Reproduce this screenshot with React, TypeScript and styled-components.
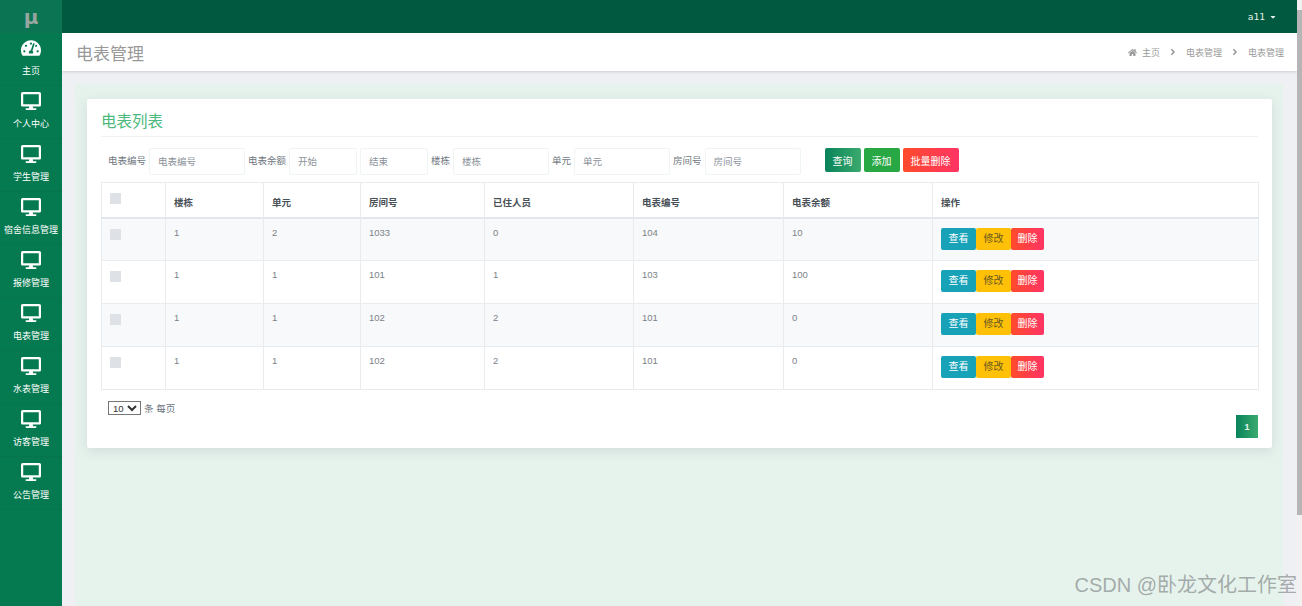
import styled, { createGlobalStyle } from "styled-components";
import { FaTachometerAlt, FaDesktop, FaHome, FaAngleRight, FaCaretDown } from "react-icons/fa";

const menu = ["主页", "个人中心", "学生管理", "宿舍信息管理", "报修管理", "电表管理", "水表管理", "访客管理", "公告管理"];
const columns = [64, 98, 97, 124, 149, 150, 149, 326];
const heads = ["楼栋", "单元", "房间号", "已住人员", "电表编号", "电表余额", "操作"];
const rows = [
  ["1", "2", "1033", "0", "104", "10"],
  ["1", "1", "101", "1", "103", "100"],
  ["1", "1", "102", "2", "101", "0"],
  ["1", "1", "102", "2", "101", "0"],
];

const App = () => (
  <Page>
    <GlobalStyle />
    <Sidebar>
      <Logo>μ</Logo>
      {menu.map((name, i) => (
        <MenuItem key={name + i}>
          <MenuIcon>{i === 0 ? <FaTachometerAlt size={20} /> : <FaDesktop size={20} />}</MenuIcon>
          <MenuLabel>{name}</MenuLabel>
        </MenuItem>
      ))}
    </Sidebar>
    <Main>
      <Topbar>
        <UserName>a11</UserName>
        <FaCaretDown size={8} />
      </Topbar>
      <PageHeader>
        <PageTitle>电表管理</PageTitle>
        <Breadcrumb>
          <FaHome size={9} />
          <span>主页</span>
          <FaAngleRight size={10} />
          <span>电表管理</span>
          <FaAngleRight size={10} />
          <span>电表管理</span>
        </Breadcrumb>
      </PageHeader>
      <Content>
        <Panel>
          <Card>
            <CardTitle>电表列表</CardTitle>
            <Filters>
              <FilterLabel>电表编号</FilterLabel>
              <FilterInput $width={96} placeholder="电表编号" />
              <FilterLabel>电表余额</FilterLabel>
              <FilterInput $width={68} placeholder="开始" />
              <FilterInput $width={68} placeholder="结束" />
              <FilterLabel>楼栋</FilterLabel>
              <FilterInput $width={96} placeholder="楼栋" />
              <FilterLabel>单元</FilterLabel>
              <FilterInput $width={96} placeholder="单元" />
              <FilterLabel>房间号</FilterLabel>
              <FilterInput $width={96} placeholder="房间号" />
              <FilterButtons>
                <FilterButton $kind="search">查询</FilterButton>
                <FilterButton $kind="add">添加</FilterButton>
                <FilterButton $kind="remove">批量删除</FilterButton>
              </FilterButtons>
            </Filters>
            <Table>
              <colgroup>
                {columns.map((w, i) => (
                  <col key={i} width={w} />
                ))}
              </colgroup>
              <thead>
                <tr>
                  <HeadCell>
                    <Check $up />
                  </HeadCell>
                  {heads.map((h) => (
                    <HeadCell key={h}>{h}</HeadCell>
                  ))}
                </tr>
              </thead>
              <tbody>
                {rows.map((row, i) => (
                  <Row key={i} $striped={i % 2 === 0}>
                    <Cell>
                      <Check />
                    </Cell>
                    {row.map((v, j) => (
                      <Cell key={j}>{v}</Cell>
                    ))}
                    <Cell>
                      <Actions>
                        <ActionButton $kind="view">查看</ActionButton>
                        <ActionButton $kind="edit">修改</ActionButton>
                        <ActionButton $kind="del">删除</ActionButton>
                      </Actions>
                    </Cell>
                  </Row>
                ))}
              </tbody>
            </Table>
            <PageSize>
              <SizeSelect defaultValue="10">
                <option value="10">10</option>
              </SizeSelect>
              <span>条 每页</span>
            </PageSize>
            <Pager>
              <PagerButton>1</PagerButton>
            </Pager>
          </Card>
        </Panel>
      </Content>
    </Main>
    <Scrollbar>
      <ScrollThumb />
    </Scrollbar>
    <Watermark>CSDN @卧龙文化工作室</Watermark>
  </Page>
);

const GlobalStyle = createGlobalStyle`
  html, body {
    margin: 0;
    padding: 0;
    overflow: hidden;
  }
  body {
    font-family: "Liberation Sans", "Noto Sans CJK SC", sans-serif;
    font-size: 9.5px;
    color: #6c757d;
  }
  * {
    box-sizing: border-box;
  }
`;

const Page = styled.div`
  position: relative;
  display: flex;
  width: 1302px;
  height: 606px;
  overflow: hidden;
  background: #eef0f4;
`;

const Sidebar = styled.aside`
  display: flex;
  flex-direction: column;
  flex: 0 0 62px;
  background: #057a50;
`;

const Logo = styled.div`
  height: 33px;
  display: flex;
  align-items: center;
  justify-content: center;
  background: #0b7553;
  color: #98a5a0;
  font-family: "DejaVu Sans", sans-serif;
  font-size: 20px;
  font-weight: bold;
`;

const MenuItem = styled.div`
  height: 53px;
  display: flex;
  flex-direction: column;
  align-items: center;
  padding-top: 5px;
  border-bottom: 1px solid #07744e;
  color: #fff;
`;

const MenuIcon = styled.div`
  height: 20px;
  display: flex;
  align-items: center;
`;

const MenuLabel = styled.div`
  margin-top: 6px;
  font-size: 9px;
  line-height: 14px;
  white-space: nowrap;
`;

const Main = styled.div`
  flex: 1;
  min-width: 0;
  display: flex;
  flex-direction: column;
`;

const Topbar = styled.header`
  height: 33px;
  flex: none;
  display: flex;
  align-items: center;
  justify-content: flex-end;
  gap: 4px;
  padding-right: 20px;
  background: #015a3f;
  color: #e3eeea;
`;

const UserName = styled.span`
  font-family: "DejaVu Sans Mono", monospace;
  font-size: 9.5px;
`;

const PageHeader = styled.div`
  height: 38px;
  flex: none;
  display: flex;
  align-items: center;
  justify-content: space-between;
  padding: 0 13px 0 14px;
  background: #fff;
  box-shadow: 0 1px 3px rgba(60, 70, 90, 0.2);
`;

const PageTitle = styled.h1`
  margin: 0;
  font-size: 17px;
  font-weight: normal;
  color: #999;
`;

const Breadcrumb = styled.div`
  display: flex;
  align-items: center;
  gap: 5px;
  font-size: 9px;
  color: #9a9a9a;

  svg {
    margin: 0 3px;
  }
  svg:first-child {
    margin: 0;
  }
`;

const Content = styled.main`
  flex: 1;
  min-height: 0;
  padding: 13px 14px 0 13px;
`;

const Panel = styled.div`
  height: 100%;
  padding: 15px 11px 0 12px;
  background: #e6f2ec;
`;

const Card = styled.section`
  height: 349px;
  padding: 10px 14px 0;
  background: #fff;
  border-radius: 2px;
  box-shadow: 0 3px 12px rgba(70, 90, 120, 0.14);
`;

const CardTitle = styled.h2`
  margin: 0;
  height: 28px;
  font-size: 15.5px;
  line-height: 26px;
  font-weight: normal;
  color: #4bb97c;
  border-bottom: 1px solid #eef1f2;
`;

const Filters = styled.div`
  display: flex;
  align-items: flex-start;
  gap: 3px;
  height: 34px;
  margin-top: 11px;
  padding-left: 7px;
`;

const FilterLabel = styled.label`
  font-size: 9.5px;
  line-height: 25px;
  color: #6f7780;
`;

const FilterInput = styled.input<{ $width: number }>`
  width: ${(p) => p.$width}px;
  height: 27px;
  padding: 0 8px;
  border: 1px solid #eef5f3;
  border-radius: 2px;
  outline: none;
  font: inherit;
  font-size: 9.5px;

  &::placeholder {
    color: #8b9299;
    opacity: 1;
  }
`;

const filterBackgrounds = {
  search: "linear-gradient(90deg, #08835a, #3baa6e)",
  add: "#28a745",
  remove: "linear-gradient(90deg, #ff4b2b, #ff3464)",
};

const FilterButtons = styled.div`
  display: flex;
  gap: 3px;
  margin-left: 21px;
`;

const FilterButton = styled.button<{ $kind: keyof typeof filterBackgrounds }>`
  height: 24px;
  padding: 0 8px;
  border: none;
  border-radius: 2px;
  background: ${(p) => filterBackgrounds[p.$kind]};
  color: #fff;
  font: inherit;
  font-size: 10px;
`;

const Table = styled.table`
  width: 1157px;
  table-layout: fixed;
  border-collapse: collapse;
  border: 1px solid #e9ecef;
`;

const HeadCell = styled.th`
  height: 35px;
  padding: 4px 8px 0;
  border: 1px solid #e9ecef;
  border-bottom: 2px solid #e3e6ec;
  text-align: left;
  font-size: 9.5px;
  color: #495057;
`;

const Row = styled.tr<{ $striped: boolean }>`
  height: 43px;
  background: ${(p) => (p.$striped ? "#f8f9fa" : "#fff")};
`;

const Cell = styled.td`
  padding: 7px 8px;
  border: 1px solid #e9ecef;
  vertical-align: top;
  font-size: 9.5px;
  line-height: 14px;
  color: #7b8288;
`;

const Check = styled.span<{ $up?: boolean }>`
  display: block;
  width: 11px;
  height: 11px;
  margin-top: ${(p) => (p.$up ? "-7px" : "3px")};
  background: #dee2e6;
`;

const Actions = styled.div`
  display: flex;
  margin-top: 2px;
`;

const actionStyles = {
  view: { bg: "#17a2b8", fg: "#fff", width: 35 },
  edit: { bg: "#ffc107", fg: "#6a5a20", width: 35 },
  del: { bg: "linear-gradient(90deg, #ff4b2b, #ff3464)", fg: "#fff", width: 33 },
};

const ActionButton = styled.button<{ $kind: keyof typeof actionStyles }>`
  width: ${(p) => actionStyles[p.$kind].width}px;
  height: 22px;
  padding: 0;
  border: none;
  border-radius: 2px;
  background: ${(p) => actionStyles[p.$kind].bg};
  color: ${(p) => actionStyles[p.$kind].fg};
  font: inherit;
  font-size: 10px;
`;

const PageSize = styled.div`
  display: flex;
  align-items: center;
  gap: 3px;
  height: 14px;
  margin: 11px 0 0 7px;
  color: #6c757d;
`;

const SizeSelect = styled.select`
  width: 33px;
  height: 14px;
  padding: 0;
  font-family: "Liberation Sans", sans-serif;
  font-size: 9.5px;
  color: #333;
  background: #fff;
`;

const Pager = styled.div`
  display: flex;
  justify-content: flex-end;
`;

const PagerButton = styled.span`
  width: 22px;
  height: 23px;
  display: flex;
  align-items: center;
  justify-content: center;
  background: linear-gradient(90deg, #08835a, #3baa6e);
  color: #e6f5ee;
  font-size: 9px;
  font-weight: bold;
`;

const Scrollbar = styled.div`
  flex: 0 0 5px;
  padding-top: 10px;
  background: #f1f1f1;
`;

const ScrollThumb = styled.div`
  height: 505px;
  background: #b5b5b5;
`;

const Watermark = styled.div`
  position: absolute;
  right: 5px;
  bottom: 7px;
  font-family: "Liberation Sans", "Noto Sans CJK SC", sans-serif;
  font-size: 20px;
  line-height: 28px;
  color: rgba(120, 125, 125, 0.62);
`;

export default App;
